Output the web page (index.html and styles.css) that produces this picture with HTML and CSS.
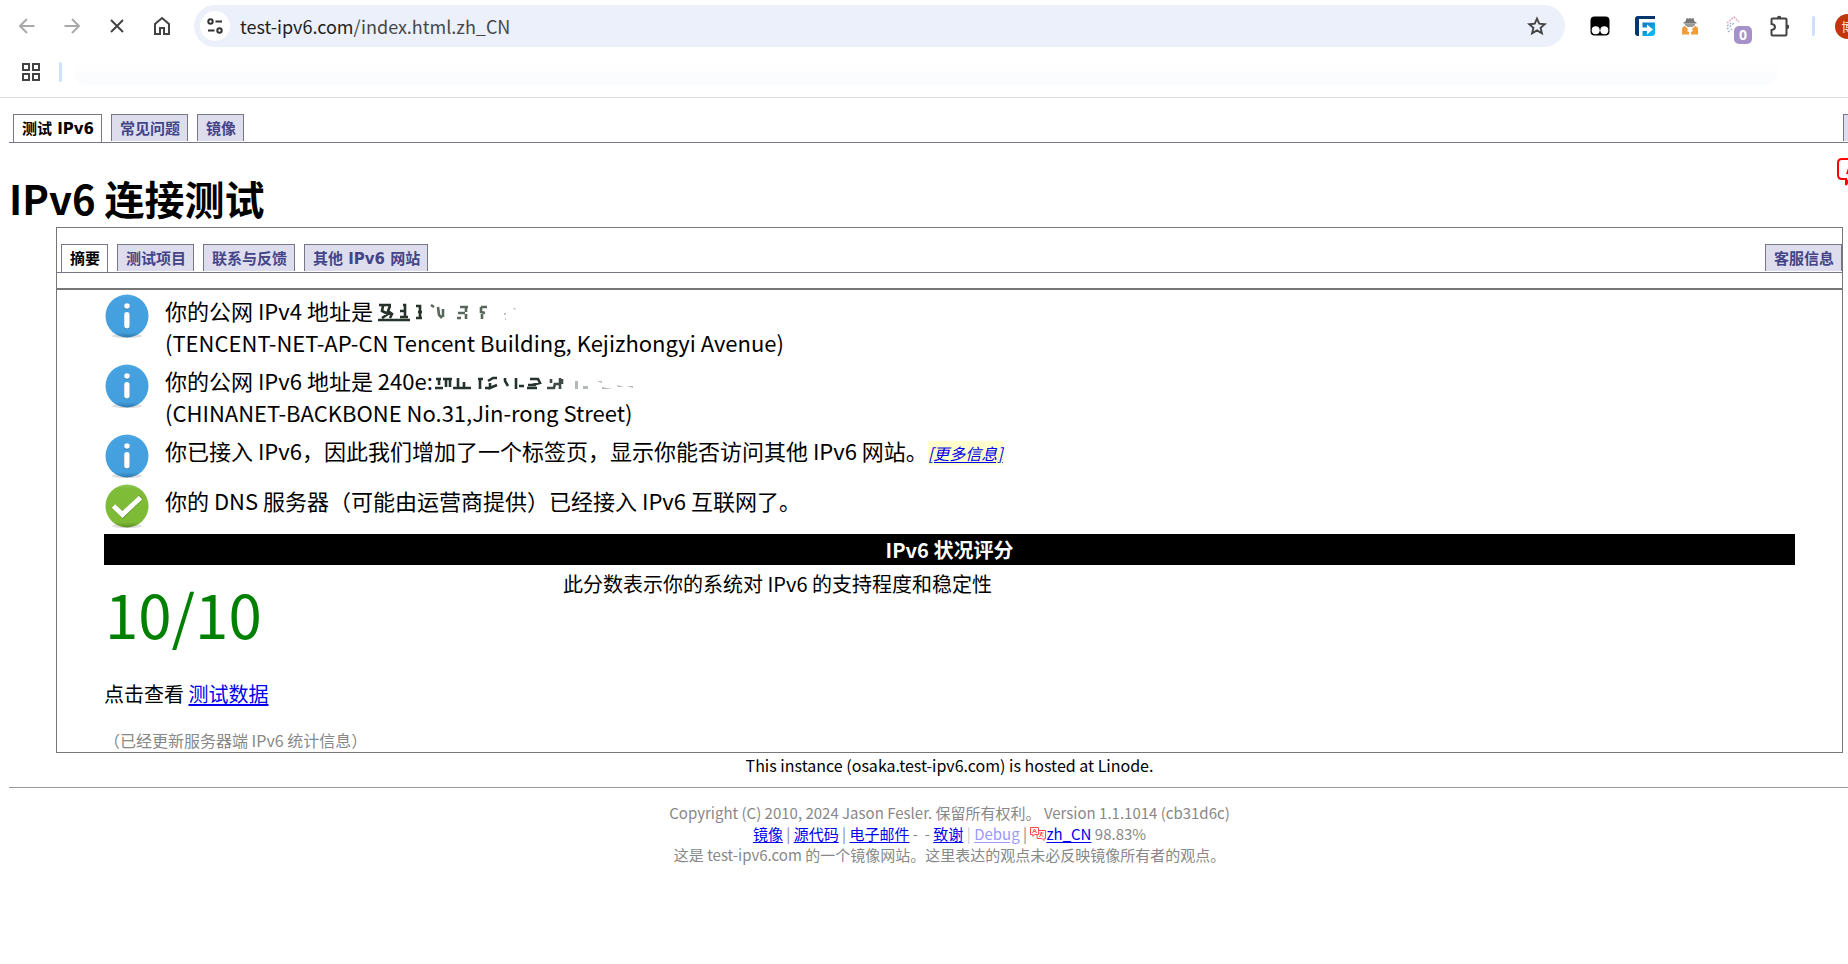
FILE: index.html
```html
<!DOCTYPE html>
<html lang="zh-CN">
<head>
<meta charset="utf-8">
<title>IPv6 连接测试</title>
<link rel="stylesheet" href="styles.css">
</head>
<body>
<svg class="defs" aria-hidden="true">
  <defs>
    <linearGradient id="blue" x1="0" y1="0" x2="0" y2="1"><stop offset="0" stop-color="#4fa9e4"/><stop offset=".1" stop-color="#45a1e0"/><stop offset=".88" stop-color="#439fdd"/><stop offset="1" stop-color="#2d78ac"/></linearGradient>
    <linearGradient id="green" x1="0" y1="0" x2="0" y2="1"><stop offset="0" stop-color="#8cc751"/><stop offset=".1" stop-color="#7fbc38"/><stop offset=".88" stop-color="#7dba35"/><stop offset="1" stop-color="#5c8f22"/></linearGradient>
    <linearGradient id="cyan" x1="0" y1="0" x2="1" y2="1"><stop offset="0" stop-color="#1168b8"/><stop offset="1" stop-color="#08c8ff"/></linearGradient>
    <filter id="smear" x="-5%" y="-20%" width="110%" height="140%"><feGaussianBlur stdDeviation=".7"/></filter>
    <symbol id="info" viewBox="0 0 44 44"><ellipse cx="22" cy="42" rx="15" ry="2" fill="#ddd"/><circle cx="22" cy="22" r="21.5" fill="url(#blue)"/><circle cx="22" cy="12.5" r="2.9" fill="#2c6c98"/><circle cx="22" cy="12" r="2.8" fill="#fff"/><rect x="19.1" y="18.5" width="5.6" height="16.5" rx="2.8" fill="#2c6c98"/><rect x="19.2" y="18" width="5.4" height="16.5" rx="2.7" fill="#fff"/></symbol>
    <symbol id="ok" viewBox="0 0 44 44"><ellipse cx="22" cy="42" rx="15" ry="2" fill="#ddd"/><circle cx="22" cy="22" r="21.5" fill="url(#green)"/><path d="M9 22.500l9 8.500 18-18" fill="none" stroke="#5a8a22" stroke-width="5.4"/><path d="M8.500 22l9 8.500L35.500 13.500" fill="none" stroke="#fff" stroke-width="5"/></symbol>
  </defs>
</svg>
<header class="browser">
  <nav class="toolbar" aria-label="浏览器">
    <button class="tool" aria-label="后退"><svg width="20" height="20" viewBox="0 0 20 20" fill="none" stroke="#a9a9a9" stroke-width="2"><path d="M17.500 10H3.500M10 3L3 10l7 7"/></svg></button>
    <button class="tool" aria-label="前进"><svg width="20" height="20" viewBox="0 0 20 20" fill="none" stroke="#a9a9a9" stroke-width="2"><path d="M2.500 10h14M10 3l7 7-7 7"/></svg></button>
    <button class="tool" aria-label="停止"><svg width="20" height="20" viewBox="0 0 20 20" fill="none" stroke="#444" stroke-width="2"><path d="M4 4l12 12M16 4L4 16"/></svg></button>
    <button class="tool" aria-label="主页"><svg width="20" height="20" viewBox="0 0 20 20" fill="none" stroke="#444" stroke-width="2"><path d="M3 18V8l7-6 7 6v10h-5v-6H8v6z"/></svg></button>
    <div class="address">
      <button class="site" aria-label="网站信息"><svg width="18" height="18" viewBox="0 0 18 18" fill="none" stroke="#333" stroke-width="2"><circle cx="4.500" cy="4.500" r="2.200"/><path d="M9.500 4.500H16M2 13.500h6.500"/><circle cx="13.500" cy="13.500" r="2.200"/></svg></button>
      <span class="url">test-ipv6.com<span class="path">/index.html.zh_CN</span></span>
      <button class="star" aria-label="收藏"><svg width="20" height="20" viewBox="0 0 20 20" fill="none" stroke="#444" stroke-width="1.900"><path d="M10 2.600l2.200 5.100 5.600.5-4.200 3.700 1.300 5.400L10 14.400l-4.900 2.900 1.300-5.400-4.200-3.700 5.600-.5z"/></svg></button>
    </div>
    <div class="extensions">
      <button class="tool" aria-label="脚本扩展"><svg width="20" height="20" viewBox="0 0 20 20"><rect x=".5" y=".5" width="19" height="19" rx="4" fill="#000"/><circle cx="5.700" cy="14.200" r="4" fill="#fff"/><circle cx="14.300" cy="14.200" r="4" fill="#fff"/></svg></button>
      <button class="tool" aria-label="跳转扩展"><svg width="22" height="22" viewBox="0 0 22 22"><path d="M1 4q0-3 3-3h17v3H5v17H4q-3 0-3-3z" fill="#06376c"/><path d="M7 6h14v12q0 3-3 3H7z" fill="url(#cyan)"/><path d="M5.500 21V5H21v2.500H8.500V21z" fill="#fff"/><path d="M7 12.500h6V9.500l6 5-6 5v-3.500H7z" fill="#fff"/></svg></button>
      <button class="tool" aria-label="隐私扩展"><svg width="18" height="18" viewBox="0 0 18 18"><path d="M5.500 1l2 .7L9 1l1.500.7 2-.7 1 3.500 2 1v1H2.500v-1l2-1z" fill="#777"/><path d="M4 6.500h10v1.500l-2.500 2H6.500L4 8z" fill="#999"/><path d="M1 17.500v-5q0-3 3-3.500l3 3-1 2 2 1v2.500zM17 17.500v-5q0-3-3-3.500l-3 3 1 2-2 1v2.500z" fill="#f29b3a"/></svg></button>
      <button class="tool badged" aria-label="计数扩展"><svg width="20" height="20" viewBox="0 0 20 20" fill="none"><path d="M2 7l7-6 5 5" stroke="#e7a5bf" stroke-width="1.500" stroke-dasharray="2 1"/><path d="M2 10l4-3M2 13l7-6M3 16l4-3" stroke="#9aaad4" stroke-width="1.300" stroke-dasharray="2 1.500"/></svg><span class="badge">0</span></button>
      <button class="tool" aria-label="扩展程序"><svg width="22" height="22" viewBox="0 0 22 22" fill="none" stroke="#444" stroke-width="2"><path d="M2.500 4.500q0-1 1-1h13q1 0 1 1v15q0 1-1 1h-13q-1 0-1-1v-4.500q3.500-.5 3.500-3t-3.500-3z"/><path d="M8 3a2.200 2.200 0 0 1 4.400 0zM18 9.500a2.200 2.200 0 0 1 0 4.400z" fill="#444" stroke="none"/></svg></button>
    </div>
    <span class="divider"></span>
    <button class="avatar" aria-label="个人资料">博</button>
  </nav>
  <div class="bookmarks">
    <button class="apps" aria-label="应用"><svg width="20" height="20" viewBox="0 0 20 20" fill="none" stroke="#444" stroke-width="2"><path d="M2 2h6v6H2zM12 2h6v6h-6zM2 12h6v6H2zM12 12h6v6h-6z"/></svg></button>
    <span class="divider"></span>
    <span class="haze"></span>
  </div>
</header>
<main class="page">
  <nav class="tabs" aria-label="主导航">
    <a class="tab current" href="#test">测试 IPv6</a>
    <a class="tab" href="#faq">常见问题</a>
    <a class="tab" href="#mirrors">镜像</a>
    <a class="tab last blank" href="#stats" aria-label="统计"></a>
  </nav>
  <div class="title-row">
    <h1>IPv6 连接测试</h1>
    <a class="lang" href="#lang" aria-label="语言"><svg width="40" height="28" viewBox="0 0 40 28" fill="none" stroke="red" stroke-width="2"><path d="M5 1h15q4 0 4 4v12q0 4-4 4h-8l-3 6v-6H5q-4 0-4-4V5q0-4 4-4zM10 16l4-11 4 11M11 13h6"/></svg></a>
  </div>
  <section class="panel">
    <nav class="tabs inner" aria-label="测试结果">
      <a class="tab current" href="#summary">摘要</a>
      <a class="tab" href="#tests">测试项目</a>
      <a class="tab" href="#contact">联系与反馈</a>
      <a class="tab" href="#other">其他 IPv6 网站</a>
      <a class="tab last" href="#help">客服信息</a>
    </nav>
    <div class="content">
      <ul class="results">
        <li><svg class="mark"><use href="#info"/></svg><p>你的公网 IPv4 地址是 <svg class="smudge" width="160" height="24" viewBox="0 0 160 24" filter="url(#smear)"><path d="M1 4h12M5 5l-1 5 6 3-6 4M12 5l-2 5 4 3-2 4M0 19h32M25 4h2v12M22 10h5M22 16h8M38 5h4v12M38 17h6M40 11h4" fill="none" stroke="#26302a" stroke-width="2.600"/><path d="M53 4l3 2M60 6l1 8 3 3M65 8v8M82 6h8M88 7v4M80 12h7M79 17h4M88 13v5M103 6h6M103 6v5l4 1M104 13v5" fill="none" stroke="#59665b" stroke-width="2.600"/><path d="M126 12h2v2h-2zM135 6l3 2-2 1zM127 17h1v2h-1z" fill="#bfc6bb"/></svg><br>(TENCENT-NET-AP-CN Tencent Building, Kejizhongyi Avenue)</p></li>
        <li><svg class="mark"><use href="#info"/></svg><p>你的公网 IPv6 地址是 240e:<svg class="smudge" width="210" height="24" viewBox="0 0 210 24" filter="url(#smear)"><path d="M3 8h5M6 8v6M2 17h8M13 7v9M17 7v9M10 8h9M25 7v11M20 17h18M31 11v6M47 7v11M45 8h5M52 17h6M55 10l5-3h4M57 12v5l7-3M72 7v3l3 5M83 7v11M86 15h5M95 14h8M97 8h8l2 4-8 2M94 17h10" fill="none" stroke="#27332e" stroke-width="2.600"/><path d="M118 8v4M114 17h7l1-5M127 7v11M121 13h6M129 8v5" fill="none" stroke="#404c46" stroke-width="2.600"/><path d="M142 10h3v8h-3zM150 15h5v3h-5zM164 10h5v2zM169 16l10 2h-10zM184 14l7 2h-6zM194 15h6v2z" fill="#b2bab3"/></svg><br>(CHINANET-BACKBONE No.31,Jin-rong Street)</p></li>
        <li><svg class="mark"><use href="#info"/></svg><p>你已接入 IPv6，因此我们增加了一个标签页，显示你能否访问其他 IPv6 网站。<a class="more" href="#more">[更多信息]</a></p></li>
        <li><svg class="mark"><use href="#ok"/></svg><p>你的 DNS 服务器（可能由运营商提供）已经接入 IPv6 互联网了。</p></li>
      </ul>
      <h2>IPv6 状况评分</h2>
      <div class="score"><strong>10/10</strong><p>此分数表示你的系统对 IPv6 的支持程度和稳定性</p></div>
      <p class="data">点击查看 <a href="#data">测试数据</a></p>
      <p class="updated">（已经更新服务器端 IPv6 统计信息）</p>
    </div>
  </section>
  <p class="host">This instance (osaka.test-ipv6.com) is hosted at Linode.</p>
  <footer>
    <p>Copyright (C) 2010, 2024 Jason Fesler. 保留所有权利。 Version 1.1.1014 (cb31d6c)</p>
    <p><a href="#mirror">镜像</a> | <a href="#source">源代码</a> | <a href="#mail">电子邮件</a> - &nbsp;- <a href="#thanks">致谢</a> <span class="faint">|</span> <a class="debug" href="#debug">Debug</a> | <a href="#zh"><svg class="lang-mini" width="16" height="15" viewBox="0 0 16 15" fill="none" stroke="#ff4b4b" stroke-width="1"><path d="M.5 1.500h8v7h-4l-1.500 2v-2H.5zM2.500 7l2-4 2 4M3.500 5.500h2M8.500 4.500h7v8h-1.500v2l-2-2H7v-4M9.500 7h4M11.500 6v1l-2 4M10.500 8l3 3"/></svg>zh_CN</a> 98.83%</p>
    <p>这是 test-ipv6.com 的一个镜像网站。这里表达的观点未必反映镜像所有者的观点。</p>
  </footer>
</main>
</body>
</html>
```
FILE: styles.css
```css
* { box-sizing: border-box; }
body {
  margin: 0;
  overflow: hidden;
  background: #fff;
  color: #000;
  font-family: "Noto Sans CJK SC", sans-serif;
}
p, h1, h2, ul { margin: 0; padding: 0; }
a { color: #00e; text-underline-offset: 2px; }
button { border: 0; padding: 0; background: none; font: inherit; }
svg { display: block; }
.defs { position: absolute; width: 0; height: 0; }

.browser { border-bottom: 1px solid #dcdcdc; overflow: hidden; }
.toolbar { display: flex; align-items: center; height: 52px; padding-left: 4px; }
.tool { display: grid; place-items: center; flex: none; width: 45px; height: 40px; }
.address {
  display: flex;
  align-items: center;
  flex: 1;
  height: 42px;
  margin-left: 10px;
  padding: 0 18px 0 6px;
  border-radius: 21px;
  background: #ebf0fa;
}
.site { display: grid; place-items: center; width: 30px; height: 30px; border-radius: 50%; background: #fff; }
.url { flex: 1; padding-left: 10px; color: #1f1f1f; font: 18px/24px "Noto Sans CJK SC", sans-serif; }
.path { color: #474747; }
.extensions { display: flex; margin-left: 12px; }
.badged { position: relative; }
.badge {
  position: absolute;
  left: 22px;
  top: 20px;
  width: 18px;
  height: 18px;
  border-radius: 5px;
  background: #a692c8;
  color: #fff;
  font: bold 14px/18px "Noto Sans", sans-serif;
}
.divider { flex: none; width: 3px; height: 20px; border-radius: 2px; background: #d0e0fc; }
.toolbar .divider { margin-left: 10px; }
.avatar {
  flex: none;
  width: 25px;
  height: 25px;
  margin: 0 -12px 0 20px;
  border-radius: 50%;
  background: #c23409;
  color: #fff;
  font-size: 12px;
  line-height: 25px;
}
.bookmarks { display: flex; align-items: center; height: 45px; padding: 0 70px 5px 21px; }
.bookmarks .divider { margin-left: 18px; }
.haze { flex: 1; height: 26px; margin-left: 12px; border-radius: 13px; background: linear-gradient(#fff, #fafbfd); }

.page { width: calc(100% + 51px); padding: 16px 9px 0; }
.tabs {
  display: flex;
  align-items: flex-start;
  gap: 9px;
  height: 29px;
  padding-left: 4px;
  border-bottom: 1px solid #778;
  font: bold 15px/28px "DejaVu Sans", "Noto Sans CJK SC", sans-serif;
}
.tab {
  height: 27px;
  padding: 0 7px 0 8px;
  border: 1px solid #778;
  border-bottom: 0;
  background: #dde;
  color: #448;
  text-decoration: none;
  white-space: nowrap;
}
.current { height: 28px; background: #fff; color: #000; }
.last { margin-left: auto; }
.blank { width: 47px; }
.title-row { display: flex; justify-content: space-between; }
h1 { margin-top: 27px; font-size: 40px; line-height: 57px; }
.lang { margin: 15px 13px 0 0; }
.panel { margin: 0 47px; border: 1px solid #777; }
.inner { margin-top: 16px; }
.content { margin-top: 15px; padding: 4px 47px 0; border-top: 2px solid #777; }
.results { list-style: none; font-size: 22px; line-height: 32px; }
.results li { display: flex; gap: 16px; padding: 0 1px 6px; }
.mark { flex: none; width: 44px; height: 44px; }
.smudge { display: inline-block; vertical-align: -5px; }
.more { background: #ffc; font-size: 16px; font-style: italic; }
h2 { background: #000; color: #fff; font-size: 20px; line-height: 31px; text-align: center; }
.score { display: grid; grid-template-columns: 459px 1fr; padding-top: 4px; }
.score strong { padding: 0 1px 8px; color: green; font-size: 60px; font-weight: 400; line-height: 88px; }
.score p { font-size: 20px; line-height: 30px; }
.data { padding-top: 14px; font-size: 20px; line-height: 30px; }
.updated { padding-top: 19px; color: #888; font-size: 16px; line-height: 24px; }
.host { padding-bottom: 10px; font-size: 16px; line-height: 24px; text-align: center; }
footer {
  padding-top: 14px;
  border-top: 1px solid #999;
  color: #888;
  font-size: 15px;
  line-height: 21px;
  text-align: center;
}
.lang-mini { display: inline-block; vertical-align: -1px; }
.faint { color: #ccc; }
.debug { color: #99f; }
```
